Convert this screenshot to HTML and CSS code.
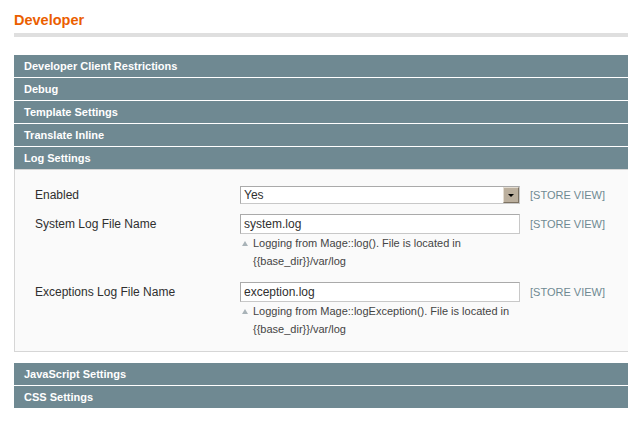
FILE: index.html
```html
<!DOCTYPE html>
<html>
<head>
<meta charset="utf-8">
<title>Developer</title>
<link rel="stylesheet" href="styles.css">
</head>
<body>
<div class="page">
  <h3 class="title">Developer</h3>
  <div class="sections">
    <div class="bar">Developer Client Restrictions</div>
    <div class="bar">Debug</div>
    <div class="bar">Template Settings</div>
    <div class="bar">Translate Inline</div>
    <div class="bar bar-open">Log Settings</div>
    <div class="panel">
      <div class="row row-select">
        <div class="label">Enabled</div>
        <div class="value">
          <div class="select">
            <span class="select-text">Yes</span>
            <span class="select-btn"><svg width="14" height="14" viewBox="0 0 14 14"><polygon points="4,6 10,6 7,9" fill="#000"/></svg></span>
          </div>
        </div>
        <div class="scope">[STORE VIEW]</div>
      </div>
      <div class="row">
        <div class="label">System Log File Name</div>
        <div class="value">
          <input class="input" type="text" value="system.log">
          <div class="note">
            <span class="note-icon"><svg width="6" height="5" viewBox="0 0 6 5"><polygon points="0,5 6,5 3,0" fill="#a9b3b8"/></svg></span>
            <span class="note-text">Logging from Mage::log(). File is located in {{base_dir}}/var/log</span>
          </div>
        </div>
        <div class="scope">[STORE VIEW]</div>
      </div>
      <div class="row">
        <div class="label">Exceptions Log File Name</div>
        <div class="value">
          <input class="input" type="text" value="exception.log">
          <div class="note">
            <span class="note-icon"><svg width="6" height="5" viewBox="0 0 6 5"><polygon points="0,5 6,5 3,0" fill="#a9b3b8"/></svg></span>
            <span class="note-text">Logging from Mage::logException(). File is located in {{base_dir}}/var/log</span>
          </div>
        </div>
        <div class="scope">[STORE VIEW]</div>
      </div>
    </div>
    <div class="bar">JavaScript Settings</div>
    <div class="bar">CSS Settings</div>
  </div>
</div>
</body>
</html>
```

FILE: styles.css
```css
html, body {
  margin: 0;
  padding: 0;
  background: #fff;
  overflow: hidden;
}

body {
  font-family: "Liberation Sans", Arial, sans-serif;
  font-size: 12px;
  color: #2f2f2f;
}

.page {
  padding: 11px 0 0 14px;
  width: 624px;
}

.title {
  margin: 0 0 18px 0;
  font-size: 14.5px;
  line-height: 18px;
  font-weight: bold;
  color: #eb5e00;
  padding-bottom: 4px;
  border-bottom: 4px solid #dfdfdf;
}

.bar {
  height: 22px;
  line-height: 22px;
  background: #6f8992;
  color: #fff;
  font-weight: bold;
  font-size: 11px;
  padding-left: 10px;
  margin-bottom: 1px;
}

.bar-open {
  margin-bottom: 0;
}

.panel {
  background: #fafafa;
  border: 1px solid #d6d6d6;
  padding: 16px 0 11px 20px;
  margin-bottom: 11px;
  display: flex;
  flex-direction: column;
  gap: 10px;
}

.row {
  display: grid;
  grid-template-columns: 195px 280px auto;
  column-gap: 10px;
  align-items: start;
}

.label {
  line-height: 20px;
  color: #2f2f2f;
}

.scope {
  font-size: 11px;
  line-height: 20px;
  color: #6f8992;
}

.row-select .label,
.row-select .scope {
  line-height: 18px;
}

.value {
  display: flex;
  flex-direction: column;
}

.input {
  display: block;
  width: 280px;
  height: 20px;
  box-sizing: border-box;
  margin: 0;
  padding: 0 3px;
  border: 1px solid;
  border-color: #aaa #c8c8c8 #c8c8c8 #aaa;
  background: #fff;
  font-family: "Liberation Sans", Arial, sans-serif;
  font-size: 12px;
  color: #2f2f2f;
  outline: none;
}

.select {
  display: flex;
  align-items: center;
  justify-content: space-between;
  width: 280px;
  height: 18px;
  box-sizing: border-box;
  border: 1px solid;
  border-color: #aaa #c8c8c8 #c8c8c8 #aaa;
  background: #fff;
  padding-left: 3px;
}

.select-text {
  font-size: 12px;
  line-height: 16px;
}

.select-btn {
  display: flex;
  width: 16px;
  height: 16px;
  box-sizing: border-box;
  border: 1px solid;
  border-color: #e4ddd2 #7d7262 #7d7262 #e4ddd2;
  background: #bbaf9d;
}

.note {
  display: flex;
  font-size: 11px;
  line-height: 18px;
  color: #444;
  margin-bottom: 2px;
}

.note-icon {
  flex: none;
  width: 11px;
  height: 18px;
  padding-left: 2px;
  display: flex;
  align-items: center;
}

.note-text {
  flex: 1;
}
```
